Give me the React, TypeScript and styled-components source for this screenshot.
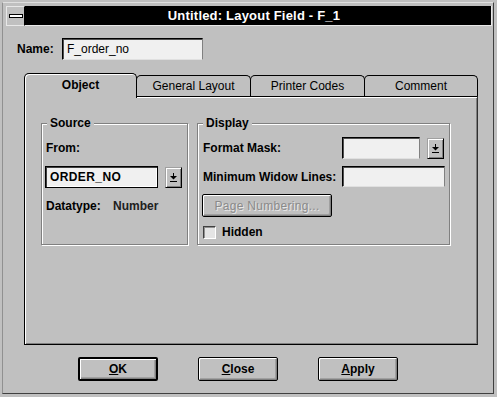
import React from 'react';
import styled, { createGlobalStyle, css } from 'styled-components';

const GlobalStyle = createGlobalStyle`
  html, body {
    margin: 0;
    padding: 0;
    background: #c0c0c0;
  }
  body {
    font-family: "Liberation Sans", Arial, sans-serif;
    font-size: 12px;
    color: #000;
  }
`;

const Screen = styled.div`
  width: 497px;
  height: 397px;
  box-sizing: border-box;
  padding: 2px 3px 3px 2px;
  background: #c0c0c0;
`;

const Frame = styled.div`
  height: 100%;
  box-sizing: border-box;
  border: 1px solid;
  border-color: #e0e0e0 #404040 #404040 #909090;
  padding: 3px 1px 0 3px;
  display: flex;
  flex-direction: column;
`;

const TitleBar = styled.div`
  display: flex;
  height: 20px;
`;

const SysBox = styled.div`
  width: 19px;
  box-sizing: border-box;
  border: 1px solid #e8e8e8;
  border-right-color: #000;
  background: #c0c0c0;
  display: flex;
  align-items: center;
  justify-content: center;
`;

const SysBar = styled.span`
  width: 12px;
  height: 2px;
  background: #fff;
  border: 1px solid #000;
`;

const Caption = styled.div`
  flex: 1;
  background: #000;
  color: #fff;
  font-weight: bold;
  font-size: 13px;
  letter-spacing: 0.2px;
  display: flex;
  align-items: center;
  justify-content: center;
  border-right: 1px solid #e8e8e8;
  border-bottom: 1px solid #e8e8e8;
  padding-right: 8px;
`;

const NameRow = styled.div`
  display: flex;
  align-items: center;
  margin-top: 12px;
  padding-left: 11px;
`;

const Label = styled.span<{ $w?: number }>`
  font-weight: bold;
  white-space: nowrap;
  ${p => p.$w && css`width: ${p.$w}px; flex: none;`}
`;

const Value = styled.span`
  font-weight: bold;
  color: #202020;
`;

const Field = styled.div<{ $w: number; $h?: number; $mono?: boolean }>`
  width: ${p => p.$w}px;
  height: ${p => p.$h ?? 22}px;
  box-sizing: border-box;
  background: #f0f0f0;
  border: 1px solid;
  border-color: #000 #808080 #e0e0e0 #000;
  box-shadow: inset 1px 1px 0 #505050;
  display: flex;
  align-items: center;
  padding-left: 4px;
  flex: none;
  ${p => p.$mono && css`
    font-weight: bold;
    letter-spacing: 0.4px;
    border-color: #000;
    box-shadow: inset 1px 1px 0 #404040, inset -1px -1px 0 #fff;
  `}
`;

const DropBtn = styled.div`
  width: 17px;
  height: 21px;
  box-sizing: border-box;
  margin-left: 7px;
  background: #c0c0c0;
  border: 1px solid;
  border-color: #a0a0a0 #000 #000 #a0a0a0;
  box-shadow: inset 1px 1px 0 #fff, inset -1px -1px 0 #808080;
  display: flex;
  align-items: center;
  justify-content: center;
  flex: none;
`;

const TabStrip = styled.div`
  display: flex;
  align-items: flex-end;
  margin: 13px 0 0 18px;
  height: 23px;
  position: relative;
  z-index: 1;
`;

const Tab = styled.div<{ $active?: boolean; $w: number }>`
  width: ${p => p.$w}px;
  box-sizing: border-box;
  border: 1px solid #000;
  border-bottom: none;
  border-radius: 5px 5px 0 0;
  background: #c0c0c0;
  display: flex;
  align-items: center;
  justify-content: center;
  & + & {
    margin-left: -1px;
  }
  ${p => p.$active
    ? css`
      height: 25px;
      margin-bottom: -2px;
      font-weight: bold;
      box-shadow: inset 1px 1px 0 #fff;
      padding-bottom: 2px;
    `
    : css`
      height: 21px;
    `}
`;

const Panel = styled.div`
  margin-left: 18px;
  width: 454px;
  height: 249px;
  box-sizing: border-box;
  border: 1px solid #000;
  border-right-color: #303030;
  box-shadow: inset 1px 1px 0 #fff, inset -1px -1px 0 #808080;
  display: flex;
  align-items: flex-start;
  padding: 26px 0 0 16px;
`;

const Group = styled.div<{ $w: number; $pad: number }>`
  position: relative;
  width: ${p => p.$w}px;
  height: 122px;
  box-sizing: border-box;
  border: 1px solid #808080;
  box-shadow: inset 1px 1px 0 #fff, 1px 1px 0 #fff;
  padding: 13px 0 0 ${p => p.$pad}px;
  & + & {
    margin-left: 9px;
  }
`;

const GroupTitle = styled.span`
  position: absolute;
  top: -8px;
  left: 5px;
  padding: 0 3px;
  background: #c0c0c0;
  font-weight: bold;
`;

const Row = styled.div<{ $mt?: number; $h?: number }>`
  display: flex;
  align-items: center;
  margin-top: ${p => p.$mt ?? 0}px;
  min-height: ${p => p.$h ?? 14}px;
`;

const Button = styled.div<{ $w: number; $default?: boolean; $disabled?: boolean }>`
  width: ${p => p.$w}px;
  height: 24px;
  box-sizing: border-box;
  border: 1px solid #000;
  border-radius: 2px;
  background: #c0c0c0;
  box-shadow: inset 1px 1px 0 #fff, inset -1px -1px 0 #808080, inset -2px -2px 0 #a0a0a0;
  display: flex;
  align-items: center;
  justify-content: center;
  font-weight: bold;
  flex: none;
  ${p => p.$default && css`
    border-width: 2px;
  `}
  ${p => p.$disabled && css`
    color: #8a8a8a;
    text-shadow: 1px 1px 0 #e8e8e8;
    font-weight: normal;
    letter-spacing: 0.3px;
  `}
  u {
    text-decoration: underline;
  }
`;

const Check = styled.span`
  width: 13px;
  height: 13px;
  box-sizing: border-box;
  border: 1px solid;
  border-color: #404040 #fff #fff #404040;
  background: #e4e4e4;
  box-shadow: inset 1px 1px 0 #909090;
  margin-right: 6px;
  flex: none;
`;

const ButtonRow = styled.div`
  display: flex;
  gap: 40px;
  margin-top: 12px;
  padding-left: 72px;
`;

function DownArrow() {
  return (
    <svg width="7" height="9" viewBox="0 0 7 9">
      <rect x="3" y="0" width="1" height="4" fill="#000" />
      <polygon points="0,3 7,3 3.5,6.5" fill="#000" />
      <rect x="0" y="8" width="7" height="1" fill="#000" />
    </svg>
  );
}

export default function App() {
  return (
    <Screen>
      <GlobalStyle />
      <Frame>
        <TitleBar>
          <SysBox><SysBar /></SysBox>
          <Caption>Untitled: Layout Field - F_1</Caption>
        </TitleBar>

        <NameRow>
          <Label $w={45}>Name:</Label>
          <Field $w={141}>F_order_no</Field>
        </NameRow>

        <TabStrip>
          <Tab $active $w={113}>Object</Tab>
          <Tab $w={115}>General Layout</Tab>
          <Tab $w={115}>Printer Codes</Tab>
          <Tab $w={114}>Comment</Tab>
        </TabStrip>
        <Panel>
          <Group $w={147} $pad={3}>
            <GroupTitle>Source</GroupTitle>
            <Row $h={22}>
              <Label style={{ marginLeft: 1 }}>From:</Label>
            </Row>
            <Row $mt={7}>
              <Field $w={113} $mono>ORDER_NO</Field>
              <DropBtn><DownArrow /></DropBtn>
            </Row>
            <Row $mt={11}>
              <Label $w={67} style={{ marginLeft: 1 }}>Datatype:</Label>
              <Value>Number</Value>
            </Row>
          </Group>
          <Group $w={253} $pad={5}>
            <GroupTitle>Display</GroupTitle>
            <Row>
              <Label $w={139}>Format Mask:</Label>
              <Field $w={78}></Field>
              <DropBtn><DownArrow /></DropBtn>
            </Row>
            <Row $mt={7}>
              <Label $w={139}>Minimum Widow Lines:</Label>
              <Field $w={103} $h={21}></Field>
            </Row>
            <Row $mt={7}>
              <Button $w={130} $disabled style={{ marginLeft: -1, height: 23 }}>Page Numbering...</Button>
            </Row>
            <Row $mt={8}>
              <Check />
              <Label>Hidden</Label>
            </Row>
          </Group>
        </Panel>

        <ButtonRow>
          <Button $w={80} $default><span><u>O</u>K</span></Button>
          <Button $w={80}><span><u>C</u>lose</span></Button>
          <Button $w={80}><span><u>A</u>pply</span></Button>
        </ButtonRow>
      </Frame>
    </Screen>
  );
}
